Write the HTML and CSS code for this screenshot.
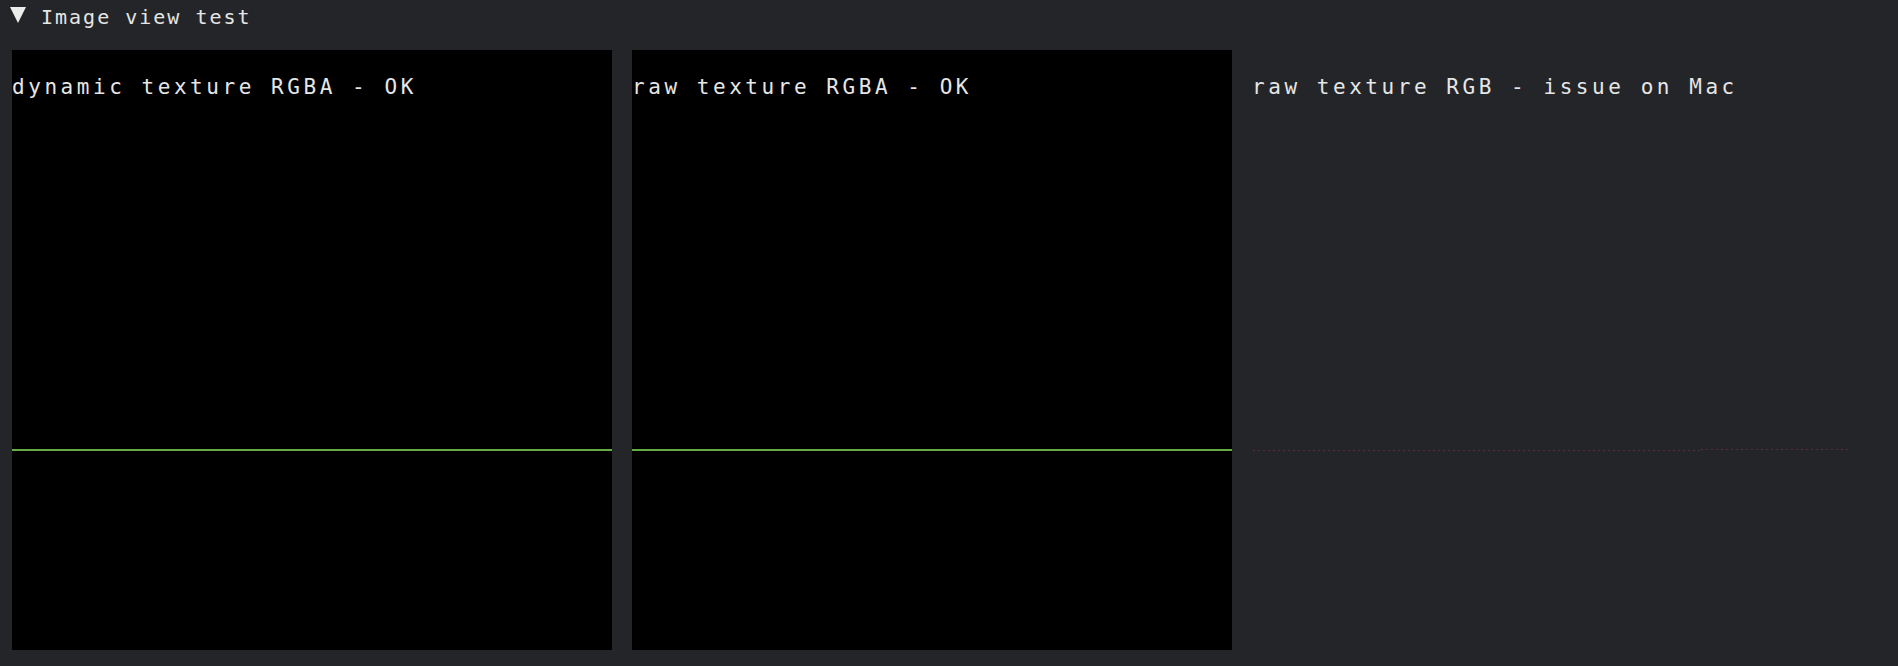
FILE: index.html
```html
<!DOCTYPE html>
<html lang="en">
<head>
    <meta charset="UTF-8">
    <meta name="viewport" content="width=device-width, initial-scale=1.0">
    <title>Image view test</title>
    <link rel="stylesheet" href="styles.css">
</head>
<body>
    <div class="tree-node">
        <svg class="arrow" width="16" height="16" viewBox="0 0 16 16">
            <polygon points="0,0 16,0 8,16" fill="#ececec"/>
        </svg>
        <span class="tree-label">Image view test</span>
    </div>

    <div class="images">
        <div class="tex tex-black">
            <div class="tex-label">dynamic texture RGBA - OK</div>
            <div class="scanline green"></div>
        </div>
        <div class="tex tex-black">
            <div class="tex-label">raw texture RGBA - OK</div>
            <div class="scanline green"></div>
        </div>
        <div class="tex">
            <div class="tex-label">raw texture RGB - issue on Mac</div>
            <div class="scanline dotted">
                <span class="dots dots-low"></span>
                <span class="dots dots-high"></span>
            </div>
        </div>
    </div>
</body>
</html>
```

FILE: styles.css
```css
body {
    margin: 0;
    padding: 0 12px;
    background-color: #242528;
    color: #e6e6e6;
    font-family: "DejaVu Sans Mono", "Liberation Mono", monospace;
    font-size: 20px;
}

.tree-node {
    display: flex;
    align-items: flex-start;
    height: 34px;
    margin-bottom: 16px;
    line-height: 34px;
    letter-spacing: 2px;
}

.arrow {
    margin: 7px 0 0 -2px;
}

.tree-label {
    margin-left: 15px;
}

.images {
    display: flex;
    gap: 20px;
}

.tex {
    width: 600px;
    height: 600px;
    display: flex;
    flex-direction: column;
}

.tex-black {
    background-color: #000;
}

.tex-label {
    padding-top: 27px;
    line-height: 20px;
    font-size: 21px;
    letter-spacing: 3.55px;
    white-space: nowrap;
}

.scanline {
    margin-top: 352px;
    height: 2px;
}

.scanline.green {
    background-color: #62ad43;
}

.scanline.dotted {
    display: flex;
    align-items: flex-start;
    margin-left: 1px;
    width: 597px;
}

.dots {
    height: 1px;
    background-image: repeating-linear-gradient(to right, #5e2c36 0, #5e2c36 2px, transparent 2px, transparent 5px);
}

.dots-low {
    width: 448px;
    margin-top: 1px;
}

.dots-high {
    width: 149px;
}
```
